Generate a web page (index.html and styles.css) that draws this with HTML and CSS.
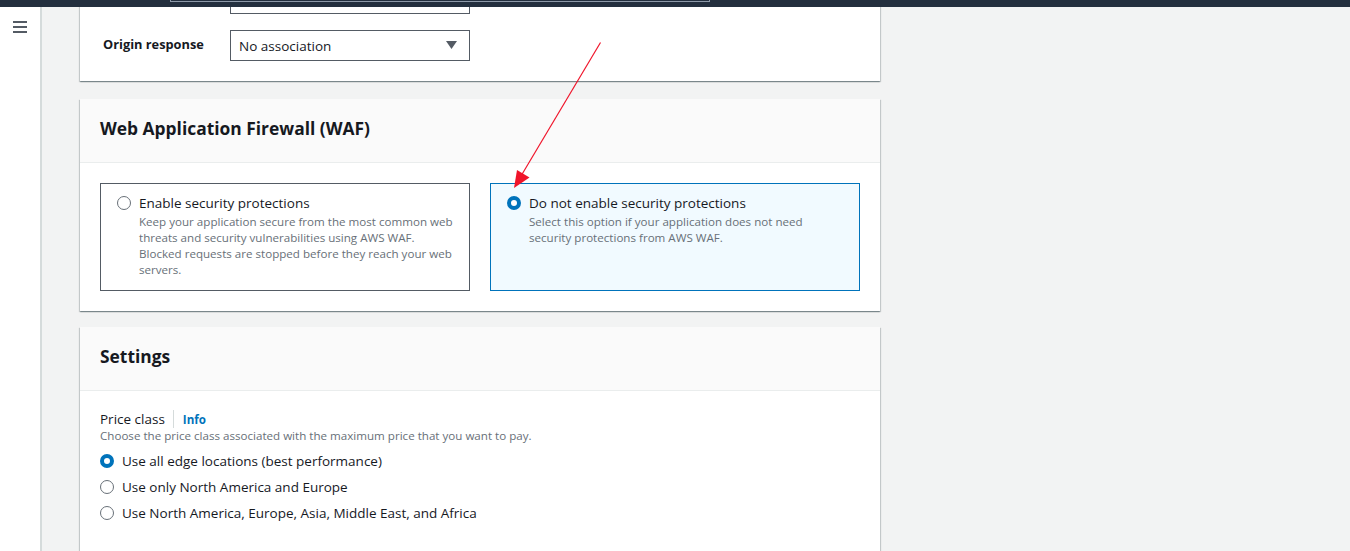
FILE: index.html
```html
<!DOCTYPE html>
<html lang="en">
<head>
<meta charset="utf-8">
<title>Create distribution</title>
<link rel="stylesheet" href="styles.css">
</head>
<body>
<div class="topbar"><div class="search"></div></div>
<div class="layout">
  <aside class="sidebar">
    <span class="burger"><i></i><i></i><i></i></span>
  </aside>
  <main class="content">
    <section class="card card-partial">
      <div class="form-row">
        <span class="field-label"></span>
        <div class="select"></div>
      </div>
      <div class="form-row">
        <span class="field-label">Origin response</span>
        <div class="select">
          <span>No association</span>
          <svg class="caret" width="11" height="8" viewBox="0 0 11 8"><path d="M0 0H11L5.5 8Z" fill="#545b64"/></svg>
        </div>
      </div>
    </section>

    <section class="card card-waf">
      <header class="card-header"><h2>Web Application Firewall (WAF)</h2></header>
      <div class="card-body tiles">
        <label class="tile">
          <span class="radio"></span>
          <span class="tile-text">
            <span class="tile-title">Enable security protections</span>
            <span class="tile-desc">Keep your application secure from the most common web threats and security vulnerabilities using AWS WAF. Blocked requests are stopped before they reach your web servers.</span>
          </span>
        </label>
        <label class="tile tile-selected">
          <span class="radio radio-checked"></span>
          <span class="tile-text">
            <span class="tile-title">Do not enable security protections</span>
            <span class="tile-desc">Select this option if your application does not need security protections from AWS WAF.</span>
          </span>
        </label>
      </div>
    </section>

    <section class="card">
      <header class="card-header"><h2>Settings</h2></header>
      <div class="card-body card-body-long">
        <div class="label-line">
          <span class="label-text">Price class</span>
          <span class="info">Info</span>
        </div>
        <div class="desc">Choose the price class associated with the maximum price that you want to pay.</div>
        <div class="radio-group">
          <label class="radio-row"><span class="radio radio-checked"></span><span>Use all edge locations (best performance)</span></label>
          <label class="radio-row"><span class="radio"></span><span>Use only North America and Europe</span></label>
          <label class="radio-row"><span class="radio"></span><span>Use North America, Europe, Asia, Middle East, and Africa</span></label>
        </div>
      </div>
    </section>
  </main>
</div>
<svg class="annotation" width="1350" height="551" viewBox="0 0 1350 551">
  <line x1="600.5" y1="42.5" x2="521" y2="176" stroke="#f0142a" stroke-width="1.2"/>
  <path d="M514 188 L517 170 L529.5 177.5 Z" fill="#f0142a"/>
</svg>
</body>
</html>
```

FILE: styles.css
```css
* { box-sizing: border-box; }
html, body { margin: 0; padding: 0; }
body {
  width: 1350px;
  height: 551px;
  overflow: hidden;
  background: #f2f3f3;
  font-family: "Open Sans", "Noto Sans", sans-serif;
  color: #16191f;
  position: relative;
}
.topbar {
  height: 7px;
  background: #232f3e;
  padding-left: 170px;
  overflow: hidden;
}
.search {
  width: 540px;
  height: 2px;
  border: 1px solid #8d99a8;
  border-top: none;
}
.layout {
  display: flex;
  height: 544px;
  overflow: hidden;
}
.sidebar {
  width: 42px;
  flex: none;
  background: #fff;
  border-right: 2px solid #d5dbdb;
  padding: 14px 0 0 13px;
}
.burger {
  display: flex;
  flex-direction: column;
  gap: 3px;
  width: 14px;
}
.burger i {
  display: block;
  height: 2px;
  background: #545b64;
}
.content {
  flex: 1;
  padding: 0 38px;
}
.card {
  width: 800px;
  background: #fff;
  box-shadow: 0 1px 1px 0 rgba(0,28,36,.3), 1px 1px 1px 0 rgba(0,28,36,.15), -1px 1px 1px 0 rgba(0,28,36,.15);
  margin-top: 16px;
}
.card-partial {
  margin-top: -44px;
  padding: 20px 0 20px 23px;
  display: flex;
  flex-direction: column;
  gap: 16px;
}
.card-waf { margin-top: 18px; }
.form-row {
  display: flex;
  align-items: center;
}
.field-label {
  width: 127px;
  font-size: 12.8px;
  font-weight: 700;
  margin-top: -4px;
}
.select {
  width: 240px;
  height: 31px;
  border: 1px solid #545b64;
  display: flex;
  align-items: center;
  justify-content: space-between;
  padding: 0 12px 0 8px;
  font-size: 13.5px;
}
.caret { display: block; margin-top: -1px; }
.card-header {
  background: #fafafa;
  border-bottom: 1px solid #eaeded;
  padding: 17px 20px 22px;
}
.card-header h2 {
  margin: 0;
  font-size: 17.4px;
  line-height: 24px;
  font-weight: 700;
}
.card-body {
  padding: 21px 20px 20px;
}
.card-body-long { padding-bottom: 60px; }
.tiles {
  display: grid;
  grid-template-columns: 1fr 1fr;
  gap: 20px;
  padding-top: 20px;
}
.tile {
  display: flex;
  align-items: flex-start;
  gap: 8px;
  border: 1px solid #545b64;
  padding: 8px 16px 12px;
  min-height: 108px;
}
.tile-selected {
  background: #f1faff;
  border-color: #0073bb;
}
.tile .radio { margin-top: 4px; }
.tile-text { display: flex; flex-direction: column; }
.tile-title { font-size: 13.5px; line-height: 22px; }
.tile-desc { font-size: 11.6px; line-height: 16px; color: #687078; }
.radio {
  flex: none;
  width: 14px;
  height: 14px;
  border-radius: 50%;
  border: 1.5px solid #687078;
  background: #fff;
}
.radio-checked {
  border: 4px solid #0073bb;
}
.label-line {
  display: flex;
  align-items: center;
  height: 20px;
  margin-top: -3px;
}
.label-text {
  font-size: 13.5px;
  padding-right: 8px;
  border-right: 1px solid #d5dbdb;
  line-height: 18px;
}
.info {
  font-size: 11.6px;
  font-weight: 700;
  color: #0073bb;
  padding-left: 9px;
}
.desc {
  font-size: 11.6px;
  line-height: 16px;
  color: #687078;
  margin-top: -1px;
}
.radio-group {
  display: flex;
  flex-direction: column;
  margin-top: 4px;
}
.radio-row {
  display: flex;
  align-items: center;
  gap: 8px;
  height: 26px;
  font-size: 13.5px;
}
.annotation {
  position: absolute;
  left: 0;
  top: 0;
  pointer-events: none;
}
```
